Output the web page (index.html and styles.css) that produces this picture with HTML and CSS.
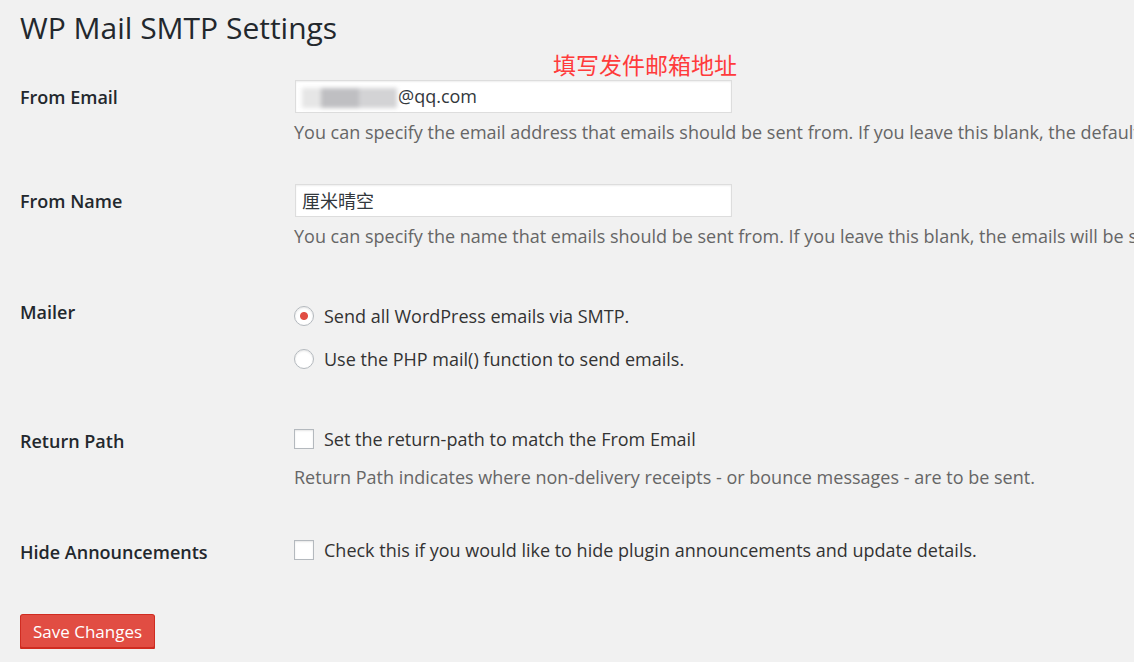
FILE: index.html
```html
<!DOCTYPE html>
<html lang="en">
<head>
    <meta charset="UTF-8">
    <title>WP Mail SMTP Settings</title>
    <link rel="stylesheet" href="styles.css">
</head>
<body>

<div class="wrap">
    <h1 class="page-title">WP Mail SMTP Settings</h1>

    <!-- Annotation drawn over the screenshot -->
    <span class="note">填写发件邮箱地址</span>

    <form class="settings">
        <!-- From Email -->
        <div class="row row-email">
            <div class="row-label">From Email</div>
            <div class="row-field">
                <div class="text-input"><span class="blurred"><i></i><i></i><i></i><i></i><i></i></span>@qq.com</div>
                <p class="description">You can specify the email address that emails should be sent from. If you leave this blank, the default email will be used.</p>
            </div>
        </div>

        <!-- From Name -->
        <div class="row row-name">
            <div class="row-label">From Name</div>
            <div class="row-field">
                <div class="text-input cjk">厘米晴空</div>
                <p class="description">You can specify the name that emails should be sent from. If you leave this blank, the emails will be sent from WordPress.</p>
            </div>
        </div>

        <!-- Mailer -->
        <div class="row row-mailer">
            <div class="row-label">Mailer</div>
            <div class="row-field">
                <label class="option"><input type="radio" name="mailer" checked> Send all WordPress emails via SMTP.</label>
                <label class="option"><input type="radio" name="mailer"> Use the PHP mail() function to send emails.</label>
            </div>
        </div>

        <!-- Return Path -->
        <div class="row row-return">
            <div class="row-label">Return Path</div>
            <div class="row-field">
                <label class="option"><input type="checkbox"> Set the return-path to match the From Email</label>
                <p class="description">Return Path indicates where non-delivery receipts - or bounce messages - are to be sent.</p>
            </div>
        </div>

        <!-- Hide Announcements -->
        <div class="row row-hide">
            <div class="row-label">Hide Announcements</div>
            <div class="row-field">
                <label class="option"><input type="checkbox"> Check this if you would like to hide plugin announcements and update details.</label>
            </div>
        </div>

        <p class="submit">
            <button type="button" class="button-primary">Save Changes</button>
        </p>
    </form>
</div>

</body>
</html>
```

FILE: styles.css
```css
/* Page styling */
html {
    overflow: hidden;
}

body {
    margin: 0;
    font-family: 'Open Sans', 'Noto Sans', 'Noto Sans CJK SC', sans-serif;
    font-size: 18px;
    color: #444;
    background-color: #F1F1F1;
}

.wrap {
    position: relative;
    padding: 9px 0 0 20px;
}

/* Title */
.page-title {
    margin: 0;
    font-size: 30px;
    line-height: 38px;
    font-weight: 400;
    color: #23282D;
}

/* Red annotation over the form */
.note {
    position: absolute;
    left: 553px;
    top: 50px;
    font-family: 'Noto Sans CJK SC', sans-serif;
    font-size: 23px;
    line-height: 28px;
    color: #FF3B3B;
}

.settings {
    margin-top: 14px;
}

/* Each setting row: label column + field column */
.row {
    display: grid;
    grid-template-columns: 274px 1fr;
}

.row-label {
    padding-top: 25px;
    line-height: 22px;
    font-weight: 600;
    color: #23282D;
}

.row-email { height: 104px; }
.row-name { height: 111px; }
.row-mailer { height: 129px; }
.row-return { height: 111px; }
.row-hide { height: 98px; }

.row-field {
    padding-top: 19px;
    white-space: nowrap;
}

/* Text inputs */
.text-input {
    box-sizing: border-box;
    width: 437px;
    height: 33px;
    padding: 0 6px;
    margin-left: 1px;
    line-height: 31px;
    border: 1px solid #DDDDDD;
    background-color: #FFFFFF;
    box-shadow: inset 0 1px 2px rgba(0,0,0,0.07);
    color: #32373C;
}

.cjk {
    font-family: 'Noto Sans CJK SC', sans-serif;
    font-size: 18px;
}

/* Blurred part of the address */
.blurred {
    display: inline-flex;
    vertical-align: middle;
    height: 20px;
    margin-right: 1px;
    filter: blur(2px);
}

.blurred i {
    display: block;
    width: 19px;
    background-color: #D3D3D5;
}

.blurred i:nth-child(2),
.blurred i:nth-child(3) {
    background-color: #BFBFC2;
}

.blurred i:first-child {
    background-color: #E6E6E6;
}

.description {
    margin: 7px 0 0;
    line-height: 24px;
    color: #666;
}

/* Radios and checkboxes */
.option {
    display: flex;
    align-items: center;
    gap: 10px;
    height: 24px;
    color: #333;
}

.row-mailer .row-field { padding-top: 28px; }
.row-mailer .option + .option { margin-top: 19px; }

.row-return .row-field,
.row-hide .row-field { padding-top: 22px; }

.row-return .description { margin-top: 14px; }

.option input {
    appearance: none;
    -webkit-appearance: none;
    flex: none;
    width: 20px;
    height: 20px;
    margin: 0;
    border: 1px solid #B4B9BE;
    background-color: #FFFFFF;
    box-shadow: inset 0 1px 2px rgba(0,0,0,0.1);
}

.option input[type="radio"] {
    border-radius: 50%;
}

.option input[type="radio"]:checked {
    background: radial-gradient(circle, #E14D43 0 3.5px, #FFFFFF 4.5px);
}

/* Save button */
.submit {
    margin: 0;
}

.button-primary {
    height: 35px;
    padding: 0 12px;
    font-family: inherit;
    font-size: 17px;
    color: #FFFFFF;
    background-color: #E14D43;
    border: 1px solid #D02C21;
    border-bottom-width: 2px;
    border-radius: 3px;
    box-shadow: 0 1px 0 #BA281E;
    cursor: pointer;
}
```
